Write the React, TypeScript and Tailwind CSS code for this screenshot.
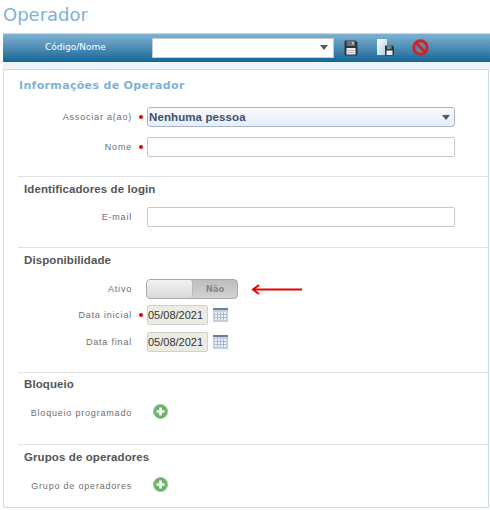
import React from 'react';

const SaveIcon = () => (
  <svg width="14" height="16" viewBox="0 0 14 16" className="shrink-0">
    <path d="M0.5 1.5 Q0.5 0.5 1.5 0.5 H11.5 L13.5 2.5 V14.5 Q13.5 15.5 12.5 15.5 H1.5 Q0.5 15.5 0.5 14.5 Z" fill="#2f343a" />
    <rect x="2.5" y="1" width="8.5" height="5" fill="#687079" />
    <rect x="8" y="2" width="1.6" height="2.6" fill="#c3c9cf" />
    <rect x="2.5" y="8" width="9" height="6.5" fill="#e9ecee" />
    <rect x="3.5" y="10" width="7" height="0.8" fill="#a5abb0" />
    <rect x="3.5" y="12" width="7" height="0.8" fill="#a5abb0" />
  </svg>
);

const SaveAsIcon = () => (
  <svg width="17" height="17" viewBox="0 0 17 17" className="shrink-0">
    <defs>
      <linearGradient id="doc" x1="0" y1="0" x2="1" y2="1">
        <stop offset="0" stopColor="#ffffff" />
        <stop offset="1" stopColor="#a9cfe6" />
      </linearGradient>
    </defs>
    <rect x="0" y="0" width="10" height="16" fill="url(#doc)" />
    <path d="M8 6.5 H15.5 L17 8 V16.5 H8 Z" fill="#2f343a" />
    <rect x="10" y="6.5" width="4.5" height="3.5" fill="#7b848d" />
    <rect x="9.5" y="11.5" width="6" height="4.5" fill="#e9ecee" />
  </svg>
);

const BlockIcon = () => (
  <svg width="17" height="17" viewBox="0 0 17 17" className="shrink-0">
    <circle cx="8.5" cy="8.5" r="6.7" fill="#6d8294" stroke="#c9252b" strokeWidth="3" />
    <path d="M4 4 L13 13" stroke="#c9252b" strokeWidth="3" />
  </svg>
);

const Caret = () => (
  <svg width="8" height="5" viewBox="0 0 8 5" className="shrink-0">
    <path d="M0 0 H8 L4 5 Z" fill="#55595e" />
  </svg>
);

const CalendarIcon = () => (
  <svg width="15" height="14" viewBox="0 0 15 14" className="ml-[5px] shrink-0">
    <rect x="0" y="0" width="15" height="14" fill="#c3cfdf" />
    <rect x="0" y="0" width="15" height="2" fill="#6f7f93" />
    <rect x="2" y="4" width="11" height="8" fill="#eef2f7" />
    <path d="M4.5 4 V12 M7.5 4 V12 M10.5 4 V12 M2 6.5 H13 M2 9.5 H13" stroke="#a9b8cc" strokeWidth="1" />
  </svg>
);

const PlusIcon = () => (
  <svg width="15" height="15" viewBox="0 0 15 15" className="shrink-0">
    <circle cx="7.5" cy="7.5" r="7" fill="#6cb26a" stroke="#8fc68d" strokeWidth="1" />
    <path d="M7.5 3.5 V11.5 M3.5 7.5 H11.5" stroke="#ffffff" strokeWidth="2.6" />
  </svg>
);

const Label = ({ children, low }: { children: React.ReactNode; low?: boolean }) => (
  <span className={`${low ? 'mt-[4px]' : ''} w-[114px] shrink-0 whitespace-nowrap text-right text-[9px] leading-none tracking-[0.8px] text-[#6e6e6e] font-['Liberation_Sans',sans-serif]`}>
    {children}
  </span>
);

const RedDot = () => <span className="ml-[7px] mr-[4px] h-[4px] w-[4px] shrink-0 rounded-full bg-[#e60000]" />;
const NoDot = () => <span className="ml-[7px] mr-[4px] w-[4px] shrink-0" />;

const TextInput = () => (
  <div className="h-[20px] w-[308px] rounded-[2px] border border-[#c8c8c8] bg-white" />
);

const DateField = ({ value }: { value: string }) => (
  <div className="flex h-[20px] w-[61px] items-center rounded-[2px] border border-[#d2d2ca] bg-[#ecece4] text-[11px] text-[#333] font-['Liberation_Sans',sans-serif]">
    {value}
  </div>
);

const Heading = ({ children }: { children: React.ReactNode }) => (
  <h2 className="h-[13px] pl-[6px] text-[11.5px] font-bold leading-[13px] text-[#555] font-['Liberation_Sans',sans-serif] tracking-[0.1px]">
    {children}
  </h2>
);

export default function App() {
  return (
    <div className="h-[510px] w-[490px] overflow-hidden bg-white">
      <h1 className="h-[33px] pl-[3px] pt-[4px] text-[18px] leading-[22px] text-[#7db3d6] font-['DejaVu_Sans',sans-serif]">
        Operador
      </h1>

      <div className="ml-[3px] flex h-[29px] items-center border-t border-[#c6d8e6] bg-gradient-to-b from-[#7fb2d2] to-[#0b6798] pb-[1px]">
        <span className="w-[149px] pl-[42px] text-[9px] text-white font-['DejaVu_Sans',sans-serif]">Código/Nome</span>
        <div className="flex h-[20px] w-[182px] items-center justify-end border border-[#c9c9c9] bg-white pr-[5px]">
          <Caret />
        </div>
        <div className="ml-[10px]"><SaveIcon /></div>
        <div className="ml-[19px]"><SaveAsIcon /></div>
        <div className="ml-[18px]"><BlockIcon /></div>
      </div>

      <div className="ml-[3px] h-[7px] bg-[#eff4f9]" />

      <div className="ml-[3px] h-[439px] w-[486px] border border-[#c9dded] pl-[14px]">
        <section className="h-[107px] border-b border-[#dfe3e6]">
          <h2 className="h-[37px] pl-[1px] pt-[9px] text-[11px] font-bold leading-[13px] tracking-[0.33px] text-[#7db3d6] font-['DejaVu_Sans',sans-serif]">
            Informações de Operador
          </h2>
          <div className="flex h-[20px] items-center">
            <Label>Associar a(ao)</Label>
            <RedDot />
            <div className="flex h-[20px] w-[308px] items-center justify-between rounded-[3px] border border-[#a8b6cb] bg-gradient-to-b from-[#f8fafd] to-[#e7eef8] pl-[1px] pr-[4px]">
              <span className="mt-[1px] text-[11.5px] font-bold tracking-[0.1px] text-[#3e4f70] font-['Liberation_Sans',sans-serif]">Nenhuma pessoa</span>
              <Caret />
            </div>
          </div>
          <div className="mt-[10px] flex h-[20px] items-center">
            <Label>Nome</Label>
            <RedDot />
            <TextInput />
          </div>
        </section>

        <section className="h-[71px] border-b border-[#dfe3e6] pt-[6px]">
          <Heading>Identificadores de login</Heading>
          <div className="mt-[11px] flex h-[20px] items-center">
            <Label>E-mail</Label>
            <NoDot />
            <TextInput />
          </div>
        </section>

        <section className="h-[125px] border-b border-[#dfe3e6] pt-[6px]">
          <Heading>Disponibilidade</Heading>
          <div className="mt-[12px] flex h-[20px] items-center">
            <Label>Ativo</Label>
            <NoDot />
            <div className="-ml-[1px] flex h-[20px] w-[92px] rounded-[4px] border border-[#a9a9a9] bg-gradient-to-b from-[#bdbdbd] to-[#d2d2d2]">
              <div className="w-[46px] rounded-[3px] border-r border-[#b9b9b9] bg-gradient-to-b from-[#f2f2f2] to-[#d9d9d9]" />
              <span className="flex-1 text-center text-[8.5px] font-bold leading-[18px] text-[#888] font-['DejaVu_Sans',sans-serif]">Não</span>
            </div>
            <svg width="51" height="11" viewBox="0 0 51 11" className="ml-[13px] shrink-0">
              <path d="M51 5.5 H3 M8 1 L2 5.5 L8 10" fill="none" stroke="#ee0000" strokeWidth="2" />
            </svg>
          </div>
          <div className="mt-[6px] flex h-[20px] items-center">
            <Label>Data inicial</Label>
            <RedDot />
            <DateField value="05/08/2021" />
            <CalendarIcon />
          </div>
          <div className="mt-[7px] flex h-[20px] items-center">
            <Label>Data final</Label>
            <NoDot />
            <DateField value="05/08/2021" />
            <CalendarIcon />
          </div>
        </section>

        <section className="h-[72px] border-b border-[#dfe3e6] pt-[5px]">
          <Heading>Bloqueio</Heading>
          <div className="mt-[13px] flex h-[15px] items-center">
            <Label low>Bloqueio programado</Label>
            <span className="w-[21px] shrink-0" />
            <PlusIcon />
          </div>
        </section>

        <section className="pt-[6px]">
          <Heading>Grupos de operadores</Heading>
          <div className="mt-[13px] flex h-[15px] items-center">
            <Label low>Grupo de operadores</Label>
            <span className="w-[21px] shrink-0" />
            <PlusIcon />
          </div>
        </section>
      </div>
    </div>
  );
}
